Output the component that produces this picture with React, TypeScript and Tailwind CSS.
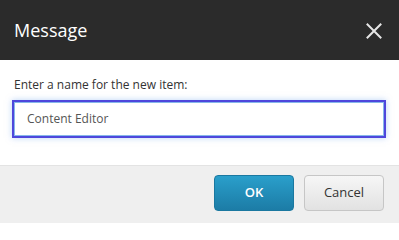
import React from "react";

export default function App() {
  return (
    <div
      className="w-[399px] h-[223px] flex flex-col bg-white overflow-hidden"
      style={{ fontFamily: '"Open Sans", "Noto Sans", sans-serif' }}
    >
      <div className="h-[60px] bg-[#2b2b2b] flex items-center justify-between pl-[14px] pr-[17px]">
        <span className="text-[18px] text-white leading-none pb-[1px]">Message</span>
        <svg width="16" height="16" viewBox="0 0 16 16" className="mt-[2px]">
          <path d="M1.5 1.5 L14.5 14.5 M14.5 1.5 L1.5 14.5" stroke="#e6e6e6" strokeWidth="2" strokeLinecap="square" />
        </svg>
      </div>
      <div className="h-[106px] flex flex-col px-[12px] pt-[17px] border-b border-[#e3e3e3]">
        <div className="pl-[2px] text-[12px] text-[#333] leading-[16px]">Enter a name for the new item:</div>
        <div className="mt-[7px] h-[38px] w-[374px] border-2 border-[#4e47dc] shadow-[0_0_6px_rgba(120,170,240,0.5)] flex">
          <div className="flex-1 border border-[#86b7ea] flex items-center pl-[12px] text-[12px] text-[#555]">
            Content Editor
          </div>
        </div>
      </div>
      <div className="flex-1 bg-[#efefef] flex justify-end items-start pt-[9px] pr-[15px] gap-[10px]">
        <button className="w-[80px] h-[36px] rounded-[4px] bg-gradient-to-b from-[#2a9fcb] to-[#1c7ca6] border border-[#1a78a0] text-white text-[13px] font-semibold">
          OK
        </button>
        <button className="w-[80px] h-[36px] rounded-[4px] bg-gradient-to-b from-[#f6f6f6] to-[#e2e2e2] border border-[#c6c6c6] text-[#333] text-[13px]">
          Cancel
        </button>
      </div>
    </div>
  );
}
